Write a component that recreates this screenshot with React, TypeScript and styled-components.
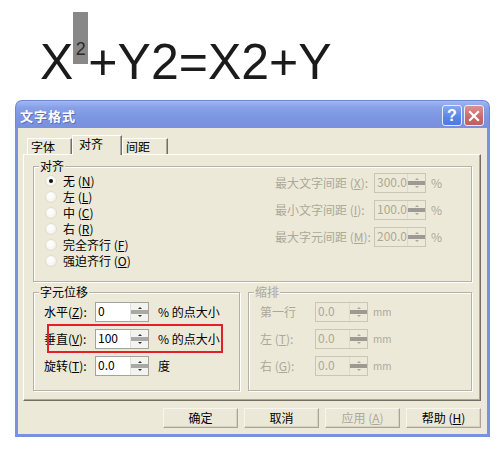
import React from "react";
import styled, { createGlobalStyle } from "styled-components";

const Global = createGlobalStyle`
  html, body { margin: 0; padding: 0; background: #fff; }
  body { font-family: "Noto Sans CJK SC", "Liberation Sans", sans-serif; }
  #root { width: 500px; height: 454px; overflow: hidden; }
`;

const Page = styled.div`
  width: 500px;
  height: 454px;
  display: flex;
  flex-direction: column;
`;

const Formula = styled.div`
  height: 100px;
  box-sizing: border-box;
  padding: 12px 0 0 40px;
  font-family: "Liberation Sans", Arial, sans-serif;
  font-size: 50px;
  line-height: 50px;
  color: #1b1b1b;
  white-space: nowrap;
`;

const SupHighlight = styled.span`
  display: inline-block;
  width: 15px;
  height: 52px;
  overflow: hidden;
  vertical-align: 15px;
  box-sizing: border-box;
  padding-top: 28px;
  background: #888888;
  color: #2b2b2b;
  font-size: 18px;
  line-height: 18px;
  text-align: center;
`;

const Dialog = styled.div`
  margin-left: 15px;
  width: 475px;
  height: 337px;
  display: flex;
  flex-direction: column;
`;

const TitleBar = styled.div`
  height: 28px;
  flex: none;
  box-sizing: border-box;
  display: flex;
  align-items: center;
  justify-content: space-between;
  padding: 2px 5px 0 4px;
  background: linear-gradient(#a3b8f2 0%, #86a0e8 25%, #7b93e0 70%, #7890dd 100%);
  border: 1px solid #6f87d9;
  border-bottom: none;
  border-radius: 7px 7px 0 0;
`;

const Title = styled.span`
  color: #fff;
  font-size: 13px;
  font-weight: 700;
  letter-spacing: 1px;
  text-shadow: 1px 1px 0 #5a6fb8;
`;

const CapButtons = styled.div`
  display: flex;
  gap: 2px;
`;

const CapBtn = styled.div<{ $kind: "help" | "close" }>`
  width: 20px;
  height: 21px;
  box-sizing: border-box;
  border: 1px solid #e8ecfb;
  border-radius: 3px;
  background: ${(p) =>
    p.$kind === "help"
      ? "linear-gradient(#86a8f2, #5a85e4 60%, #4f7bdf)"
      : "linear-gradient(#dc9290, #c76a6a 60%, #bf5f60)"};
  color: #fff;
  font-family: "Liberation Sans", Arial, sans-serif;
  font-weight: 700;
  font-size: 16px;
  display: flex;
  align-items: center;
  justify-content: center;
`;

const Frame = styled.div`
  flex: 1;
  display: flex;
  flex-direction: column;
  background: #ece9d8;
  border: 3px solid #7b90df;
  border-top: none;
  padding: 7px 6px 0 5px;
`;

const TabStrip = styled.div`
  height: 19px;
  display: flex;
  align-items: flex-end;
  padding-left: 4px;
  position: relative;
  z-index: 1;
`;

const Tab = styled.div<{ $w: number; $active?: boolean }>`
  width: ${(p) => p.$w}px;
  height: ${(p) => (p.$active ? 20 : 16)}px;
  margin-bottom: ${(p) => (p.$active ? -1 : 0)}px;
  box-sizing: border-box;
  border-top: 1px solid #fff;
  border-left: 1px solid #fff;
  border-right: 1px solid #716f64;
  box-shadow: inset -1px 0 0 #aca899;
  background: #ece9d8;
  font-size: 12px;
  line-height: 14px;
  padding: ${(p) => (p.$active ? "1px 0 0 6px" : "1px 0 0 3px")};
  color: #000;
`;

const Panel = styled.div`
  height: 247px;
  box-sizing: border-box;
  border: 1px solid;
  border-color: #fff #716f64 #716f64 #fff;
  box-shadow: inset -1px -1px 0 #aca899;
  padding: 11px 8px 0 9px;
  display: flex;
  flex-direction: column;
  gap: 10px;
`;

const Group = styled.div<{ $w?: number; $h: number }>`
  position: relative;
  box-sizing: border-box;
  width: ${(p) => (p.$w ? `${p.$w}px` : "100%")};
  height: ${(p) => p.$h}px;
  border: 1px solid #b5b2a3;
  box-shadow: inset 1px 1px 0 #fff, 1px 1px 0 #fff;
`;

const Legend = styled.span<{ $disabled?: boolean }>`
  position: absolute;
  top: -9px;
  left: 5px;
  padding: 0 1px;
  background: #ece9d8;
  font-size: 12px;
  line-height: 16px;
  color: ${(p) => (p.$disabled ? "#aca899" : "#000")};
`;

const AlignBody = styled.div`
  display: flex;
  padding-top: 6px;
`;

const RadioList = styled.div`
  flex: 1;
  display: flex;
  flex-direction: column;
  padding-left: 11px;
`;

const RadioRow = styled.div`
  height: 16px;
  display: flex;
  align-items: center;
  gap: 6px;
  font-size: 12px;
  line-height: 16px;
  color: #000;
`;

const RadioCircle = styled.span<{ $checked?: boolean }>`
  width: 12px;
  height: 12px;
  flex: none;
  box-sizing: border-box;
  border-radius: 50%;
  border: 1px solid #e0ddd0;
  background: radial-gradient(circle at 40% 35%, #ffffff 0%, #f8f7f2 55%, #e8e5d9 100%);
  display: flex;
  align-items: center;
  justify-content: center;
  &::after {
    content: "";
    display: ${(p) => (p.$checked ? "block" : "none")};
    width: 4px;
    height: 4px;
    border-radius: 50%;
    background: #111;
  }
`;

const FieldGrid = styled.div<{ $cols: string }>`
  display: grid;
  grid-template-columns: ${(p) => p.$cols};
  row-gap: 7px;
  align-items: center;
`;

const RightFields = styled.div`
  width: 196px;
  flex: none;
`;

const Label = styled.span<{ $disabled?: boolean }>`
  font-size: 12px;
  line-height: 16px;
  white-space: nowrap;
  color: ${(p) => (p.$disabled ? "#aca899" : "#000")};
`;

const Unit = styled.span<{ $disabled?: boolean; $small?: boolean; $gap: number }>`
  padding-left: ${(p) => p.$gap}px;
  font-size: ${(p) => (p.$small ? 10 : 12)}px;
  line-height: 16px;
  white-space: nowrap;
  color: ${(p) => (p.$disabled ? "#aca899" : "#000")};
`;

const U = styled.span`
  text-decoration: underline;
`;

const SpinBox = styled.div<{ $w: number; $disabled?: boolean }>`
  width: ${(p) => p.$w}px;
  height: 20px;
  box-sizing: border-box;
  display: flex;
  border: 1px solid ${(p) => (p.$disabled ? "#c9c6b8" : "#a3a29c")};
  background: ${(p) => (p.$disabled ? "#ece9d8" : "#fff")};
`;

const SpinValue = styled.span<{ $disabled?: boolean }>`
  flex: 1;
  padding-left: 2px;
  font-size: 12px;
  line-height: 15px;
  color: ${(p) => (p.$disabled ? "#aca899" : "#000")};
`;

const SpinCol = styled.div<{ $disabled?: boolean }>`
  width: 17px;
  flex: none;
  display: flex;
  flex-direction: column;
  background: ${(p) => (p.$disabled ? "#ece9d8" : "#f3f3f0")};
  border-left: 1px solid ${(p) => (p.$disabled ? "#ddd9cb" : "#e2e2dc")};
`;

const SpinPart = styled.div<{ $align: "flex-start" | "flex-end" }>`
  flex: 1;
  display: flex;
  justify-content: center;
  align-items: ${(p) => p.$align};
  padding: 1px 0;
`;

const SpinBand = styled.div<{ $disabled?: boolean }>`
  height: 4px;
  flex: none;
  background: ${(p) => (p.$disabled ? "#9c9a92" : "#a8a8a6")};
`;

const Arrow = styled.span<{ $dir: "up" | "down"; $disabled?: boolean }>`
  width: 0;
  height: 0;
  border-left: 2px solid transparent;
  border-right: 2px solid transparent;
  ${(p) =>
    p.$dir === "up"
      ? `border-bottom: 2px solid ${p.$disabled ? "#aca899" : "#333"};`
      : `border-top: 2px solid ${p.$disabled ? "#aca899" : "#333"};`}
`;

const OffsetBody = styled.div<{ $pl: number }>`
  padding: 9px 0 0 ${(p) => p.$pl}px;
`;

const BottomRow = styled.div`
  display: flex;
  gap: 8px;
`;

const Annotation = styled.div`
  position: absolute;
  left: 13px;
  top: 31px;
  width: 176px;
  height: 29px;
  box-sizing: border-box;
  border: 2px solid #e2202a;
  pointer-events: none;
`;

const ButtonRow = styled.div`
  display: flex;
  justify-content: flex-end;
  gap: 6px;
  margin-top: 7px;
`;

const Button = styled.div<{ $disabled?: boolean }>`
  width: 75px;
  height: 20px;
  box-sizing: border-box;
  border: 1px solid;
  border-color: #f6f5ef #a8a596 #a8a596 #f6f5ef;
  box-shadow: inset -1px -1px 0 #d6d3c4;
  background: #ebe8d8;
  display: flex;
  align-items: center;
  justify-content: center;
  font-size: 12px;
  line-height: 16px;
  color: ${(p) => (p.$disabled ? "#aca899" : "#000")};
`;

function Spinner({ w, value, disabled }: { w: number; value: string; disabled?: boolean }) {
  return (
    <SpinBox $w={w} $disabled={disabled}>
      <SpinValue $disabled={disabled}>{value}</SpinValue>
      <SpinCol $disabled={disabled}>
        <SpinPart $align="flex-end">
          <Arrow $dir="up" $disabled={disabled} />
        </SpinPart>
        <SpinBand $disabled={disabled} />
        <SpinPart $align="flex-start">
          <Arrow $dir="down" $disabled={disabled} />
        </SpinPart>
      </SpinCol>
    </SpinBox>
  );
}

const radios: [string, string, boolean][] = [
  ["无", "N", true],
  ["左", "L", false],
  ["中", "C", false],
  ["右", "R", false],
  ["完全齐行", "F", false],
  ["强迫齐行", "O", false],
];

const spacing: [string, string, string][] = [
  ["最大文字间距", "X", "300.0"],
  ["最小文字间距", "I", "100.0"],
  ["最大字元间距", "M", "200.0"],
];

const shifts: [string, string, string, string][] = [
  ["水平", "Z", "0", "% 的点大小"],
  ["垂直", "V", "100", "% 的点大小"],
  ["旋转", "T", "0.0", "度"],
];

export default function App() {
  return (
    <Page>
      <Global />
      <Formula>
        X<SupHighlight>2</SupHighlight>+Y2=X2+Y
      </Formula>
      <Dialog>
        <TitleBar>
          <Title>文字格式</Title>
          <CapButtons>
            <CapBtn $kind="help">?</CapBtn>
            <CapBtn $kind="close">
              <svg width="12" height="12" viewBox="0 0 12 12">
                <path d="M2 2 L10 10 M10 2 L2 10" stroke="#fff" strokeWidth="2.2" strokeLinecap="square" />
              </svg>
            </CapBtn>
          </CapButtons>
        </TitleBar>
        <Frame>
          <TabStrip>
            <Tab $w={45}>字体</Tab>
            <Tab $w={50} $active>
              对齐
            </Tab>
            <Tab $w={46}>间距</Tab>
          </TabStrip>
          <Panel>
            <Group $h={116}>
              <Legend>对齐</Legend>
              <AlignBody>
                <RadioList>
                  {radios.map(([t, k, c]) => (
                    <RadioRow key={k}>
                      <RadioCircle $checked={c} />
                      <span>
                        {t} (<U>{k}</U>)
                      </span>
                    </RadioRow>
                  ))}
                </RadioList>
                <RightFields>
                  <FieldGrid $cols="99px 52px auto">
                    {spacing.map(([t, k, v]) => (
                      <React.Fragment key={k}>
                        <Label $disabled>
                          {t} (<U>{k}</U>):
                        </Label>
                        <Spinner w={52} value={v} disabled />
                        <Unit $disabled $gap={5}>
                          %
                        </Unit>
                      </React.Fragment>
                    ))}
                  </FieldGrid>
                </RightFields>
              </AlignBody>
            </Group>
            <BottomRow>
              <Group $w={207} $h={99}>
                <Legend>字元位移</Legend>
                <OffsetBody $pl={10}>
                  <FieldGrid $cols="51px 54px auto">
                    {shifts.map(([t, k, v, u]) => (
                      <React.Fragment key={k}>
                        <Label>
                          {t}(<U>{k}</U>):
                        </Label>
                        <Spinner w={54} value={v} />
                        <Unit $gap={9}>{u}</Unit>
                      </React.Fragment>
                    ))}
                  </FieldGrid>
                </OffsetBody>
                <Annotation />
              </Group>
              <Group $w={224} $h={99}>
                <Legend $disabled>缩排</Legend>
                <OffsetBody $pl={11}>
                  <FieldGrid $cols="55px 53px auto">
                    <Label $disabled>第一行</Label>
                    <Spinner w={53} value="0.0" disabled />
                    <Unit $disabled $small $gap={5}>
                      mm
                    </Unit>
                    <Label $disabled>
                      左 (<U>T</U>):
                    </Label>
                    <Spinner w={53} value="0.0" disabled />
                    <Unit $disabled $small $gap={5}>
                      mm
                    </Unit>
                    <Label $disabled>
                      右 (<U>G</U>):
                    </Label>
                    <Spinner w={53} value="0.0" disabled />
                    <Unit $disabled $small $gap={5}>
                      mm
                    </Unit>
                  </FieldGrid>
                </OffsetBody>
              </Group>
            </BottomRow>
          </Panel>
          <ButtonRow>
            <Button>确定</Button>
            <Button>取消</Button>
            <Button $disabled>
              应用 (<U>A</U>)
            </Button>
            <Button>
              帮助 (<U>H</U>)
            </Button>
          </ButtonRow>
        </Frame>
      </Dialog>
    </Page>
  );
}
